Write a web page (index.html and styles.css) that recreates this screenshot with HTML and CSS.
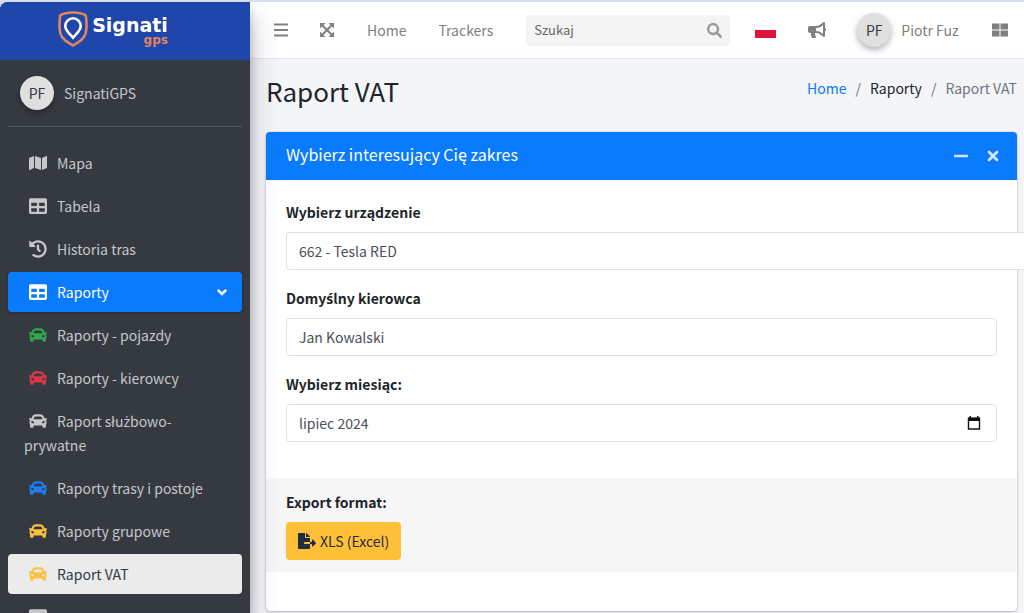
FILE: index.html
```html
<!DOCTYPE html>
<html lang="pl">
<head>
<meta charset="utf-8">
<title>Raport VAT</title>
<link rel="stylesheet" href="styles.css">
</head>
<body>
<svg class="sprite" aria-hidden="true">
  <symbol id="map" viewBox="0 0 576 512"><path d="M0 117.66v346.32c0 11.32 11.43 19.06 21.94 14.86L160 416V32L20.12 87.95A32.006 32.006 0 0 0 0 117.66zM192 416l192 64V96L192 32v384zM554.06 33.16L416 96v384l139.88-55.95A31.996 31.996 0 0 0 576 394.34V48.02c0-11.32-11.43-19.06-21.94-14.86z"/></symbol>
  <symbol id="table" viewBox="0 0 512 512"><path d="M464 32H48C21.49 32 0 53.49 0 80v352c0 26.51 21.49 48 48 48h416c26.51 0 48-21.49 48-48V80c0-26.51-21.49-48-48-48zM224 416H64v-96h160v96zm0-160H64v-96h160v96zm224 160H288v-96h160v96zm0-160H288v-96h160v96z"/></symbol>
  <symbol id="history" viewBox="0 0 512 512"><path d="M504 255.531c.253 136.64-111.18 248.372-247.82 248.468-59.015.042-113.223-20.53-155.822-54.911-11.077-8.94-11.905-25.541-1.839-35.607l11.267-11.267c8.609-8.609 22.353-9.551 31.891-1.984C173.062 425.135 212.781 440 256 440c101.705 0 184-82.311 184-184 0-101.705-82.311-184-184-184-48.814 0-93.149 18.969-126.068 49.932l50.754 50.754c10.08 10.08 2.941 27.314-11.313 27.314H24c-8.837 0-16-7.163-16-16V38.627c0-14.254 17.234-21.393 27.314-11.314l49.372 49.372C129.209 34.136 189.552 8 256 8c136.81 0 247.747 110.78 248 247.531zm-180.912 78.784l9.823-12.63c8.138-10.463 6.253-25.542-4.21-33.679L288 256.349V152c0-13.255-10.745-24-24-24h-16c-13.255 0-24 10.745-24 24v135.651l65.409 50.874c10.463 8.137 25.541 6.253 33.679-4.21z"/></symbol>
  <symbol id="car" viewBox="0 0 512 512"><path d="M499.99 176h-59.87l-16.64-41.6C406.38 91.63 365.57 64 319.5 64h-127c-46.06 0-86.88 27.63-103.99 70.4L71.87 176H12.01C4.2 176-1.53 183.34.37 190.91l6 24C7.7 220.25 12.5 224 18.01 224h20.07C24.65 235.73 16 252.78 16 272v48c0 16.12 6.16 30.67 16 41.93V416c0 17.67 14.33 32 32 32h32c17.67 0 32-14.33 32-32v-32h256v32c0 17.67 14.33 32 32 32h32c17.67 0 32-14.33 32-32v-54.07c9.84-11.25 16-25.8 16-41.93v-48c0-19.22-8.65-36.27-22.07-48H494c5.51 0 10.31-3.75 11.64-9.09l6-24c1.89-7.57-3.84-14.91-11.65-14.91zm-352.06-17.83c7.29-18.22 24.94-30.17 44.57-30.17h127c19.63 0 37.28 11.95 44.57 30.17L384 208H128l19.93-49.83zM96 319.8c-19.2 0-32-12.76-32-31.9S76.8 256 96 256s48 28.71 48 47.85-28.8 15.95-48 15.95zm320 0c-19.2 0-48 3.19-48-15.95S396.8 256 416 256s32 12.76 32 31.9-12.8 31.9-32 31.9z"/></symbol>
  <symbol id="search" viewBox="0 0 512 512"><path d="M505 442.7L405.3 343c-4.5-4.5-10.6-7-17-7H372c27.6-35.3 44-79.7 44-128C416 93.1 322.9 0 208 0S0 93.1 0 208s93.1 208 208 208c48.3 0 92.7-16.4 128-44v16.3c0 6.4 2.5 12.5 7 17l99.7 99.7c9.4 9.4 24.6 9.4 33.9 0l28.3-28.3c9.4-9.4 9.4-24.6.1-34zM208 336c-70.7 0-128-57.2-128-128 0-70.7 57.2-128 128-128 70.7 0 128 57.2 128 128 0 70.7-57.2 128-128 128z"/></symbol>
  <symbol id="bullhorn" viewBox="0 0 576 512"><path d="M576 240c0-23.63-12.95-44.04-32-55.12V32.01C544 23.26 537.02 0 512 0c-7.12 0-14.19 2.38-19.98 7.02l-85.03 68.03C364.28 109.19 310.66 128 256 128H64c-35.35 0-64 28.65-64 64v96c0 35.35 28.65 64 64 64h33.7c-1.39 10.48-2.18 21.14-2.18 32 0 39.77 9.26 77.35 25.56 110.94 5.19 10.69 16.52 17.06 28.4 17.06h74.28c26.05 0 41.69-29.84 25.9-50.56-16.4-21.52-26.15-48.36-26.15-77.44 0-11.11 1.62-21.79 4.41-32H256c54.66 0 108.28 18.81 150.98 52.95l85.03 68.03a32.023 32.023 0 0 0 19.98 7.02c24.92 0 32-22.78 32-32V295.13C563.05 284.04 576 263.63 576 240zm-96 141.42l-33.05-26.44C392.95 311.78 325.12 288 256 288v-96c69.12 0 136.95-23.78 190.95-66.98L480 98.58v282.84z"/></symbol>
  <symbol id="export" viewBox="0 0 576 512"><path d="M384 121.9c0-6.3-2.5-12.4-7-16.9L279.1 7c-4.5-4.5-10.6-7-17-7H256v128h128zM571 308l-95.7-96.4c-10.1-10.1-27.4-3-27.4 11.3V288h-64v64h64v65.2c0 14.3 17.3 21.4 27.4 11.3L571 332c6.6-6.6 6.6-17.4 0-24zm-379 28v-32c0-8.800 7.200-16 16-16h176V160H248c-13.200 0-24-10.800-24-24V0H24C10.700 0 0 10.700 0 24v464c0 13.300 10.700 24 24 24h336c13.300 0 24-10.700 24-24V352H208c-8.800 0-16-7.200-16-16z"/></symbol>
</svg>
<div class="app">
  <aside class="sidebar">
    <a class="brand" href="#">
      <svg class="shield" viewBox="0 0 30 36" aria-hidden="true">
        <path d="M15 1.500C10 1.500 5.500 2.300 2.200 4.400 1.300 11 1 17 2.400 22.500 4 28 9 31 15 34.500 21 31 26 28 27.600 22.500 29 17 28.700 11 27.800 4.400 24.500 2.300 20 1.500 15 1.500z" fill="none" stroke="#e2855f" stroke-width="2.600"/>
        <path d="M15 7.300a7.700 7.700 0 0 0-7.700 7.700c0 4.700 4 7.300 7.700 11.700 3.700-4.400 7.700-7 7.700-11.700A7.700 7.700 0 0 0 15 7.300z" fill="none" stroke="#fff" stroke-width="2.600"/>
      </svg>
      <span class="wordmark"><span class="word">Signati</span><span class="word-sub">gps</span></span>
    </a>
    <div class="user-panel">
      <span class="avatar">PF</span>
      <a class="user-name" href="#">SignatiGPS</a>
    </div>
    <nav>
      <ul class="menu">
        <li><a class="item" href="#"><svg class="ico"><use href="#map"/></svg>Mapa</a></li>
        <li><a class="item" href="#"><svg class="ico"><use href="#table"/></svg>Tabela</a></li>
        <li><a class="item" href="#"><svg class="ico"><use href="#history"/></svg>Historia tras</a></li>
        <li><a class="item item-open" href="#"><svg class="ico"><use href="#table"/></svg>Raporty<svg class="chevron" viewBox="0 0 12 12"><path d="M1.800 3.800L6 8l4.200-4.200" fill="none" stroke="#fff" stroke-width="2.600"/></svg></a></li>
      </ul>
      <ul class="menu submenu">
        <li><a class="item" href="#"><svg class="ico green"><use href="#car"/></svg>Raporty - pojazdy</a></li>
        <li><a class="item" href="#"><svg class="ico red"><use href="#car"/></svg>Raporty - kierowcy</a></li>
        <li><a class="item" href="#"><svg class="ico"><use href="#car"/></svg>Raport słu<span class="accent">ż</span>bowo-prywatne</a></li>
        <li><a class="item" href="#"><svg class="ico blue"><use href="#car"/></svg>Raporty trasy i postoje</a></li>
        <li><a class="item" href="#"><svg class="ico amber"><use href="#car"/></svg>Raporty grupowe</a></li>
        <li><a class="item item-current" href="#"><svg class="ico amber"><use href="#car"/></svg>Raport VAT</a></li>
        <li><a class="item" href="#" aria-label="Raporty"><svg class="ico"><use href="#table"/></svg></a></li>
      </ul>
    </nav>
  </aside>
  <div class="main">
    <header class="topbar">
      <button class="icon-btn" type="button" aria-label="Menu"><svg viewBox="0 0 16 16"><path d="M1 2.500h14M1 8h14M1 13.500h14" stroke="currentColor" stroke-width="2"/></svg></button>
      <button class="icon-btn" type="button" aria-label="Pełny ekran"><svg viewBox="0 0 16 16"><path d="M3 3l10 10M13 3L3 13" stroke="currentColor" stroke-width="2"/><path d="M1 1h5.500L1 6.500zM15 1v5.500L9.500 1zM1 15V9.500L6.500 15zM15 15H9.500L15 9.500z" fill="currentColor"/></svg></button>
      <a class="top-link" href="#">Home</a>
      <a class="top-link" href="#">Trackers</a>
      <form class="search">
        <input type="search" placeholder="Szukaj" aria-label="Szukaj">
        <button type="button" aria-label="Znajdź"><svg><use href="#search"/></svg></button>
      </form>
      <div class="tools">
        <a class="flag" href="#" aria-label="Polski"></a>
        <button class="icon-btn horn" type="button" aria-label="Ogłoszenia"><svg><use href="#bullhorn"/></svg></button>
        <a class="account" href="#"><span class="avatar">PF</span>Piotr Fuz</a>
        <button class="icon-btn grid" type="button" aria-label="Panel"><svg viewBox="0 0 16 16"><path d="M0 1.500h7.500v6H0zM8.500 1.500H16v6H8.500zM0 8.500h7.500v6H0zM8.500 8.500H16v6H8.500z" fill="currentColor"/></svg></button>
      </div>
    </header>
    <main class="content">
      <div class="page-head">
        <h1>Raport VAT</h1>
        <nav class="crumbs"><a class="crumb-link" href="#">Home</a><span>/</span><a class="crumb-dark" href="#">Raporty</a><span>/</span><span>Raport VAT</span></nav>
      </div>
      <section class="card">
        <div class="card-head">
          <h2>Wybierz interesujący Cię zakres</h2>
          <button type="button" aria-label="Zwiń"><svg viewBox="0 0 14 14"><path d="M1 7h12" stroke="currentColor" stroke-width="2.600" stroke-linecap="round"/></svg></button>
          <button type="button" aria-label="Zamknij"><svg viewBox="0 0 14 14"><path d="M3 3l8 8M11 3l-8 8" stroke="currentColor" stroke-width="2.800" stroke-linecap="round"/></svg></button>
        </div>
        <div class="card-body">
          <label for="device">Wybierz urządzenie</label>
          <select class="field field-wide" id="device"><option>662 - Tesla RED</option></select>
          <label for="driver">Domy<span class="accent">ś</span>lny kierowca</label>
          <input class="field" id="driver" type="text" value="Jan Kowalski">
          <label for="month">Wybierz miesiąc:</label>
          <div class="field month">
            <input id="month" type="text" value="lipiec 2024">
            <button type="button" aria-label="Kalendarz"><svg viewBox="0 0 14 14"><path d="M1.500 2.500h11v10.500h-11z" fill="none" stroke="#111" stroke-width="1.400"/><path d="M1 1.500h12V5H1zM2.500 0H4v2H2.500zM10 0h1.500v2H10z" fill="#111"/></svg></button>
          </div>
        </div>
        <div class="card-export">
          <span class="label">Export format:</span>
          <button class="xls" type="button"><svg><use href="#export"/></svg>XLS (Excel)</button>
        </div>
        <div class="card-end"></div>
      </section>
    </main>
  </div>
</div>
</body>
</html>
```
FILE: styles.css
```css
* { box-sizing: border-box; }

body {
  margin: 0;
  padding-top: 2px;
  background: #d9dfea;
  color: #212529;
  font: 14px/24px "Noto Sans CJK JP", "Noto Sans", sans-serif;
  overflow-x: hidden;
}

a { color: inherit; text-decoration: none; }
button { padding: 0; border: 0; background: none; color: inherit; font: inherit; }
button svg { display: block; fill: currentColor; }
h1, h2 { margin: 0; font-weight: 400; }
.sprite { display: none; }

/* Letters that the main family has no precomposed glyph for */
.accent { font-family: "Noto Sans", sans-serif; line-height: 1; }

.app {
  display: flex;
  height: calc(100vh - 2px);
  overflow: hidden;
}

/* Sidebar */
.sidebar {
  position: relative;
  z-index: 1;
  flex: 0 0 250px;
  overflow: hidden;
  border-top-left-radius: 8px;
  background: #353a40;
  color: #c5c8cb;
  box-shadow: 0 14px 28px rgba(0, 0, 0, .25), 0 10px 10px rgba(0, 0, 0, .2);
}

.brand {
  display: flex;
  justify-content: center;
  align-items: center;
  gap: 4px;
  height: 58px;
  padding-right: 24px;
  background: #1f46ab;
}
.shield { width: 30px; height: 36px; margin-bottom: 4px; }
.wordmark {
  display: flex;
  flex-direction: column;
  font-family: "DejaVu Sans", sans-serif;
  font-weight: 700;
}
.word { font-size: 19px; line-height: 18px; color: #fff; }
.word-sub { align-self: flex-end; font-size: 12px; line-height: 12px; color: #e2855f; }

.avatar {
  display: flex;
  justify-content: center;
  align-items: center;
  width: 34px;
  height: 34px;
  border-radius: 50%;
  background: #dfdfdf;
  color: #343a40;
  box-shadow: 0 3px 6px rgba(0, 0, 0, .3);
}

.user-panel {
  display: flex;
  align-items: center;
  gap: 10px;
  height: 67px;
  margin: 0 8px;
  padding-left: 12px;
  border-bottom: 1px solid #4f5962;
}

.menu {
  display: flex;
  flex-direction: column;
  gap: 3px;
  margin: 16px 8px 0;
  padding: 0;
  list-style: none;
}
.submenu { margin-top: 3px; }
.item {
  display: block;
  position: relative;
  min-height: 40px;
  padding: 8px 16px;
  border-radius: 4px;
}
.ico {
  width: 18px;
  height: 18px;
  margin: 0 10px 0 5px;
  vertical-align: -3px;
  fill: currentColor;
}
.item-open { background: #0b7bfd; color: #fff; box-shadow: 0 1px 3px rgba(0, 0, 0, .3); }
.item-current { background: #ebebeb; color: #343a40; }
.chevron { position: absolute; top: 14px; right: 14px; width: 12px; height: 12px; }
.green { fill: #2fa84f; }
.red { fill: #dc3848; }
.blue { fill: #1c7df5; }
.amber { fill: #fdc040; }

/* Top bar */
.main { flex: 1; min-width: 0; background: #f3f5f9; }
.topbar {
  display: flex;
  align-items: center;
  height: 57px;
  padding: 0 16px 0 23px;
  border-bottom: 1px solid #e4e6ea;
  background: #fff;
  color: #808080;
}
.icon-btn svg { width: 16px; height: 16px; }
.icon-btn + .icon-btn { margin-left: 30px; }
.top-link { margin-left: 32px; }
.search {
  display: flex;
  flex: 0 1 204px;
  height: 31px;
  margin-left: 33px;
  padding: 0 8px;
  border-radius: 4px;
  background: #f4f4f4;
}
.search input {
  flex: 1;
  min-width: 0;
  padding: 0;
  border: 0;
  background: none;
  font: inherit;
  font-size: 13px;
}
.search input::placeholder { color: #666; }
.search svg { width: 15px; height: 15px; fill: #999; }
.tools { display: flex; flex: 1; align-items: center; }
.flag {
  width: 21px;
  height: 16px;
  margin-left: 25px;
  background: linear-gradient(#fff 50%, #dc143c 50%);
}
.horn { margin-left: 32px; }
.horn svg { width: 18px; }
.account { display: flex; align-items: center; gap: 10px; margin-left: 31px; }
.grid { margin-left: auto; }

/* Content */
.content { padding: 14px 7px 0 16px; }
.page-head { display: flex; justify-content: space-between; height: 59px; }
.page-head h1 { font-size: 26px; line-height: 36px; }
.crumbs { display: flex; gap: 9px; padding-top: 3px; color: #6c757d; }
.crumb-link { color: #0b7bfd; }
.crumb-dark { color: #212529; }

.card {
  border-radius: 4px;
  background: #fff;
  box-shadow: 0 0 1px rgba(0, 0, 0, .2), 0 1px 3px rgba(0, 0, 0, .25);
}
.card-head {
  display: flex;
  align-items: center;
  gap: 18px;
  height: 48px;
  padding: 0 17px 0 20px;
  border-radius: 4px 4px 0 0;
  background: #0b7bfd;
  color: #fff;
}
.card-head h2 { flex: 1; padding-bottom: 4px; font-size: 16px; line-height: 24px; }
.card-head button { color: #cfe4fe; }
.card-head svg { width: 14px; height: 14px; }
.card-body { display: flex; flex-direction: column; padding: 20px 20px 36px; }
label, .label { display: block; margin-bottom: 8px; font-weight: 700; }
.field {
  width: 100%;
  height: 38px;
  margin-bottom: 16px;
  padding: 0 12px;
  border: 1px solid #dee0e3;
  border-radius: 4px;
  background: #fff;
  color: #495057;
  font: inherit;
}
.field-wide { width: 110%; appearance: none; }
.month { display: flex; align-items: center; margin-bottom: 0; padding-right: 15px; }
.month input { flex: 1; padding: 0; border: 0; color: inherit; font: inherit; }
.month svg { width: 14px; height: 14px; }
.card-export { padding: 12px 20px; background: #f6f6f6; }
.xls {
  display: flex;
  align-items: center;
  gap: 4px;
  height: 38px;
  padding: 0 12px;
  border-radius: 4px;
  background: #ffc038;
  color: #1f2d3d;
}
.xls svg { width: 18px; height: 16px; }
.card-end { height: 39px; }
```
